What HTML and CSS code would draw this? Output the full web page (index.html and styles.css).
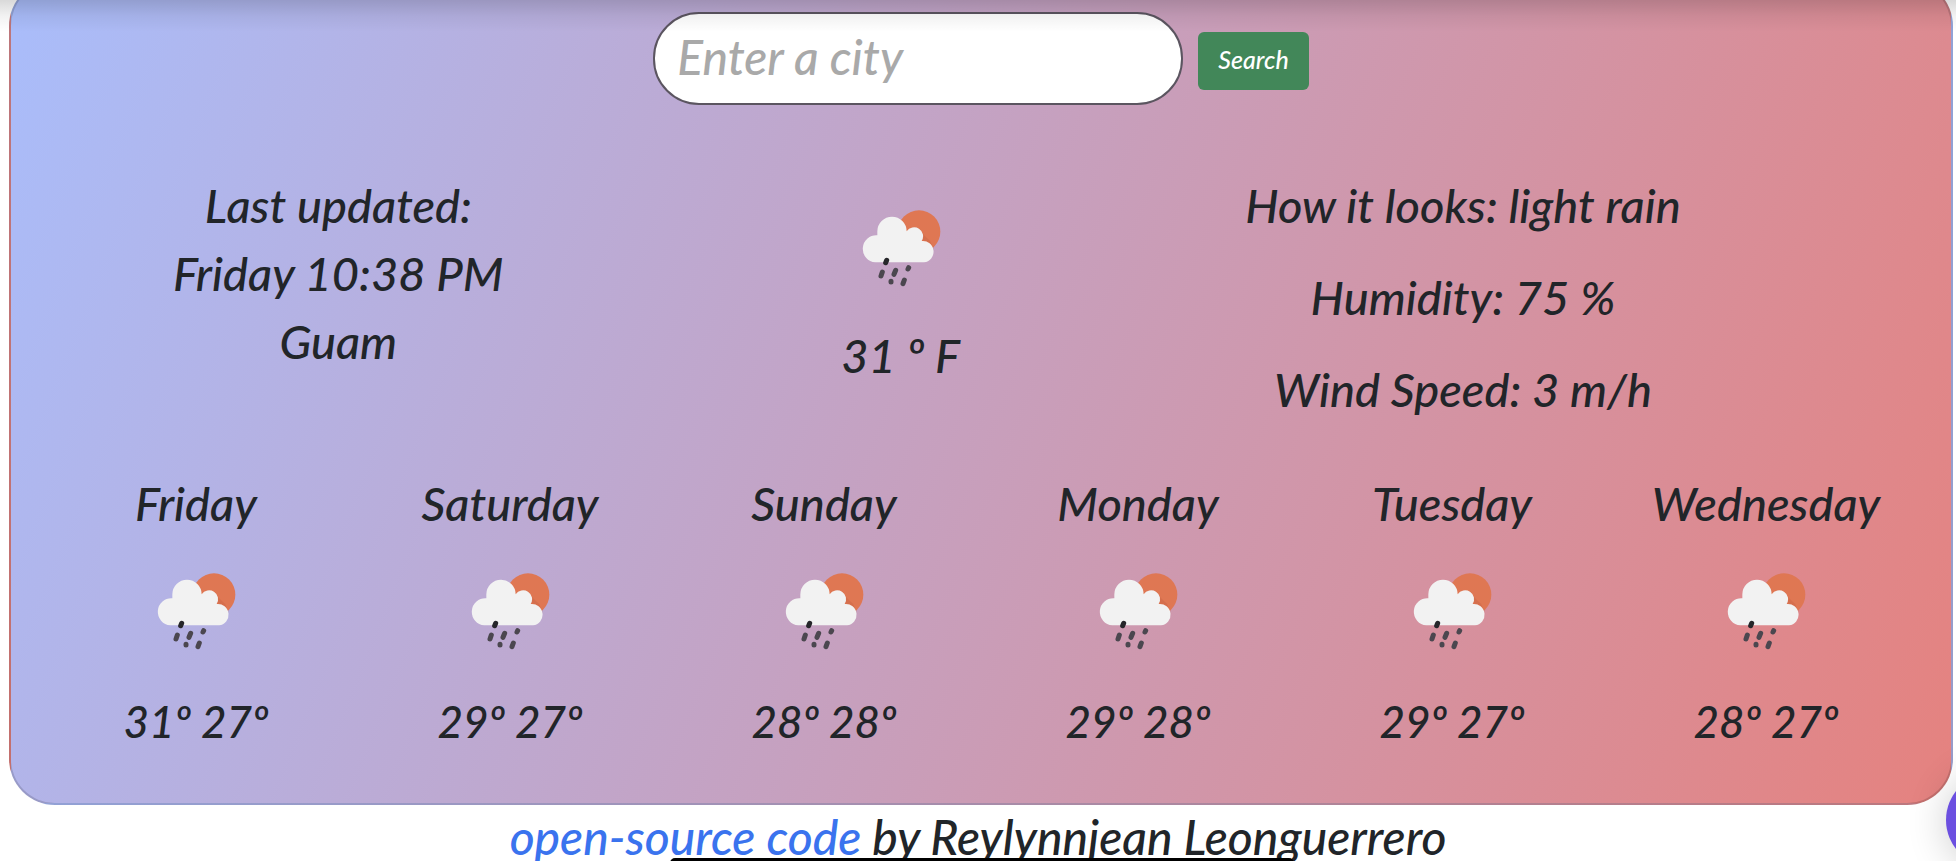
FILE: index.html
```html
<!DOCTYPE html>
<html lang="en">
<head>
<meta charset="utf-8">
<meta name="viewport" content="width=device-width, initial-scale=1">
<title>Weather</title>
<link rel="stylesheet" href="styles.css">
</head>
<body>
<svg class="symbols" aria-hidden="true">
  <symbol id="rain" viewBox="93 55 300 300">
    <circle cx="297" cy="153" r="64" fill="#df7753"/>
    <path d="M258 157 A25 25 0 0 1 305 178 Q340 182 343 212 L330 180 Q310 165 300 146 Q275 130 258 157Z" fill="#b9563c" opacity=".25"/>
    <path d="M166 245 A40.500 40.500 0 0 1 172 164 V152 A44 44 0 0 1 260 152 A26 26 0 0 1 305 181 A32 32 0 0 1 312 245 Z" fill="#f2f2f2"/>
    <g stroke="#4b474f" stroke-width="15" stroke-linecap="round">
      <path d="M200 239 L197 246" stroke="#26262a"/>
      <path d="M187 274 L183 286"/>
      <path d="M227 269 L222 281"/>
      <path d="M266 261 L264 265"/>
      <path d="M213 302 L213 304"/>
      <path d="M253 298 L249 309"/>
    </g>
  </symbol>
</svg>
<div class="top-shade"></div>
<main class="card">
  <form class="search">
    <input class="search-input" type="search" placeholder="Enter a city" aria-label="City">
    <button class="search-button" type="button">Search</button>
  </form>
  <section class="current">
    <div class="place">
      <div>Last updated:</div>
      <div>Friday 10:38 PM</div>
      <div>Guam</div>
    </div>
    <div class="now">
      <svg class="icon" role="img" aria-label="light rain"><use href="#rain"/></svg>
      <div>31 º F</div>
    </div>
    <div class="details">
      <div>How it looks: light rain</div>
      <div>Humidity: 75 %</div>
      <div>Wind Speed: 3 m/h</div>
    </div>
  </section>
  <section class="forecast">
    <div class="day"><div>Friday</div><svg class="icon" role="img" aria-label="rain"><use href="#rain"/></svg><div class="temps">31º 27º</div></div>
    <div class="day"><div>Saturday</div><svg class="icon" role="img" aria-label="rain"><use href="#rain"/></svg><div class="temps">29º 27º</div></div>
    <div class="day"><div>Sunday</div><svg class="icon" role="img" aria-label="rain"><use href="#rain"/></svg><div class="temps">28º 28º</div></div>
    <div class="day"><div>Monday</div><svg class="icon" role="img" aria-label="rain"><use href="#rain"/></svg><div class="temps">29º 28º</div></div>
    <div class="day"><div>Tuesday</div><svg class="icon" role="img" aria-label="rain"><use href="#rain"/></svg><div class="temps">29º 27º</div></div>
    <div class="day"><div>Wednesday</div><svg class="icon" role="img" aria-label="rain"><use href="#rain"/></svg><div class="temps">28º 27º</div></div>
  </section>
</main>
<footer class="credit"><a href="#source">open-source code</a> by Reylynnjean Leonguerrero</footer>
<button class="bubble" type="button" aria-label="Open chat"></button>
<div class="home-bar"></div>
</body>
</html>
```
FILE: styles.css
```css
* { box-sizing: border-box; }

html { height: 100%; overflow: hidden; }

body {
  position: relative;
  height: 100%;
  margin: 0;
  overflow: hidden;
  display: flow-root;
  background: #fff;
  color: #212529;
  font-family: Lato, "Open Sans", sans-serif;
  font-size: 47px;
  font-style: italic;
  font-weight: 500;
  line-height: 68px;
  text-align: center;
}

.symbols { position: absolute; width: 0; height: 0; }

.top-shade {
  position: absolute;
  inset: 0 0 auto;
  height: 32px;
  z-index: 2;
  background: linear-gradient(rgba(0, 0, 0, .15), rgba(0, 0, 0, .05) 50%, transparent);
  pointer-events: none;
}

.card {
  margin: -20px 3px 0 9px;
  padding: 30px 0 48px;
  border: 2px solid rgba(0, 0, 0, .14);
  border-radius: 46px;
  background: linear-gradient(112deg, #a9bdfb 0%, #e5827f 100%);
}

.search {
  display: flex;
  justify-content: center;
  align-items: center;
  gap: 15px;
}

.search-input {
  width: 530px;
  height: 93px;
  padding: 0 22px 4px;
  border: 2px solid #5b5560;
  border-radius: 46px;
  outline: 0;
  background: #fff;
  color: inherit;
  font: inherit;
  font-size: 48px;
  appearance: none;
}

.search-input::placeholder { color: #a9a9a9; opacity: 1; }

.search-button {
  height: 58px;
  margin-top: 4px;
  padding: 0 20px 4px;
  border: 0;
  border-radius: 6px;
  background: #428759;
  color: #fff;
  font: inherit;
  font-size: 25px;
  line-height: 54px;
}

.current {
  display: grid;
  grid-template-columns: 4fr 3fr 4fr 1fr;
  margin-top: 66px;
  padding: 0 6px;
}

.now {
  display: flex;
  flex-direction: column;
  align-items: center;
  gap: 22px;
  padding-top: 28px;
}

.details {
  display: flex;
  flex-direction: column;
  gap: 24px;
}

.icon { display: block; width: 100px; height: 100px; }

.forecast {
  display: grid;
  grid-template-columns: repeat(6, 1fr);
  margin-top: 46px;
  padding: 0 28px;
}

.day {
  display: flex;
  flex-direction: column;
  align-items: center;
  gap: 25px;
}

.temps { font-size: 44px; }

.credit { font-size: 48px; line-height: 64px; }

.credit a { color: #3a73ee; text-decoration: none; }

.bubble {
  position: absolute;
  right: -84px;
  bottom: -6px;
  width: 94px;
  height: 94px;
  padding: 0;
  border: 0;
  border-radius: 50%;
  background: #6b4fe0;
  box-shadow: 0 2px 40px rgba(0, 0, 0, .2);
}

.home-bar {
  position: absolute;
  bottom: -7px;
  left: 50%;
  width: 624px;
  height: 10px;
  margin-left: -308px;
  border-radius: 5px;
  background: #000;
}
```
